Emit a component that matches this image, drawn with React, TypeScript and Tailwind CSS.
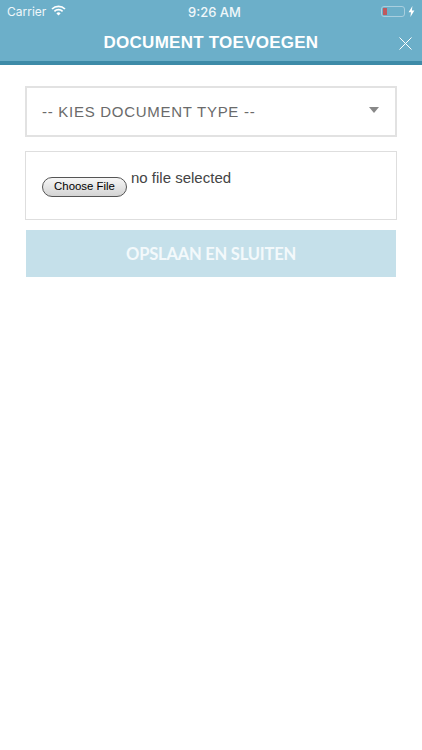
export default function App() {
  return (
    <div className="w-[422px] h-[750px] bg-white overflow-hidden flex flex-col font-['Liberation_Sans',sans-serif]">
      <header className="h-[65px] shrink-0 bg-[#6cafc9] border-b-[4px] border-[#3e8ba8] flex flex-col">
        <div className="h-[22px] shrink-0 relative flex items-center justify-between pl-[7px] pr-[7px] text-[#f0f7fa]">
          <div className="flex items-center gap-[5px] mt-[1px]">
            <span className="font-['Inter',sans-serif] text-[12px]">Carrier</span>
            <svg className="-mt-[3px]" width="15" height="11" viewBox="0 0 15 11" fill="none" stroke="#fff" strokeWidth="1.7" strokeLinecap="butt">
              <path d="M1 4 A9.3 9.3 0 0 1 14 4" />
              <path d="M3.4 6.3 A6 6 0 0 1 11.6 6.3" />
              <path d="M7.5 10.6 L5.4 8.4 A3 3 0 0 1 9.6 8.4 Z" fill="#fff" stroke="none" />
            </svg>
          </div>
          <span className="absolute left-[188px] top-[3px] font-['Inter',sans-serif] text-[13px] font-medium">9:26 AM</span>
          <div className="flex items-center gap-[3px]">
            <div className="w-[24px] h-[11px] rounded-[3px] border border-[#a9cfdf] p-[1px] flex">
              <div className="w-[4px] h-full bg-[#c0595e]" />
            </div>
            <svg width="7" height="11" viewBox="0 0 7 11" fill="#fff">
              <path d="M4.4 0 L0.6 6.2 H3 L2.4 11 L6.4 4.6 H3.9 Z" />
            </svg>
          </div>
        </div>
        <div className="flex-1 relative flex items-center justify-center">
          <h1 className="text-white font-bold text-[17px] tracking-[0.25px] leading-none mt-[2px]">DOCUMENT TOEVOEGEN</h1>
          <svg className="absolute left-[399px] top-[15px]" width="13" height="13" viewBox="0 0 13 13" stroke="#fff" strokeWidth="1" fill="none">
            <path d="M0.5 0.5 L12.5 12.5 M12.5 0.5 L0.5 12.5" />
          </svg>
        </div>
      </header>
      <main className="flex flex-col px-[25px] pt-[21px]">
        <div className="h-[51px] border-[2.5px] border-[#e2e2e2] flex items-center justify-between pl-[15px] pr-[16.5px]">
          <span className="text-[#6a6a6a] text-[15px] tracking-[0.72px] mt-[2px]">-- KIES DOCUMENT TYPE --</span>
          <div className="w-0 h-0 border-l-[5.5px] border-r-[5.5px] border-t-[6px] border-l-transparent border-r-transparent border-t-[#888] -mt-[3px]" />
        </div>
        <div className="h-[69px] mt-[14px] border border-[#dedede] pl-[16px] pt-[17px] flex items-start">
          <button className="mt-[8px] w-[85px] h-[20px] rounded-[10px] border border-[#555] bg-gradient-to-b from-[#f6f6f6] to-[#d4d4d4] text-[11.4px] text-black leading-none">Choose File</button>
          <span className="ml-[4px] text-[15px] leading-[18px] text-[#444]">no file selected</span>
        </div>
        <button className="h-[47px] mt-[10px] mx-[1px] pt-[2px] bg-[#c5e0ea] text-white/80 text-[16.5px] font-bold flex items-center justify-center font-['Lato',sans-serif] tracking-[-0.2px]">OPSLAAN EN SLUITEN</button>
      </main>
    </div>
  );
}
